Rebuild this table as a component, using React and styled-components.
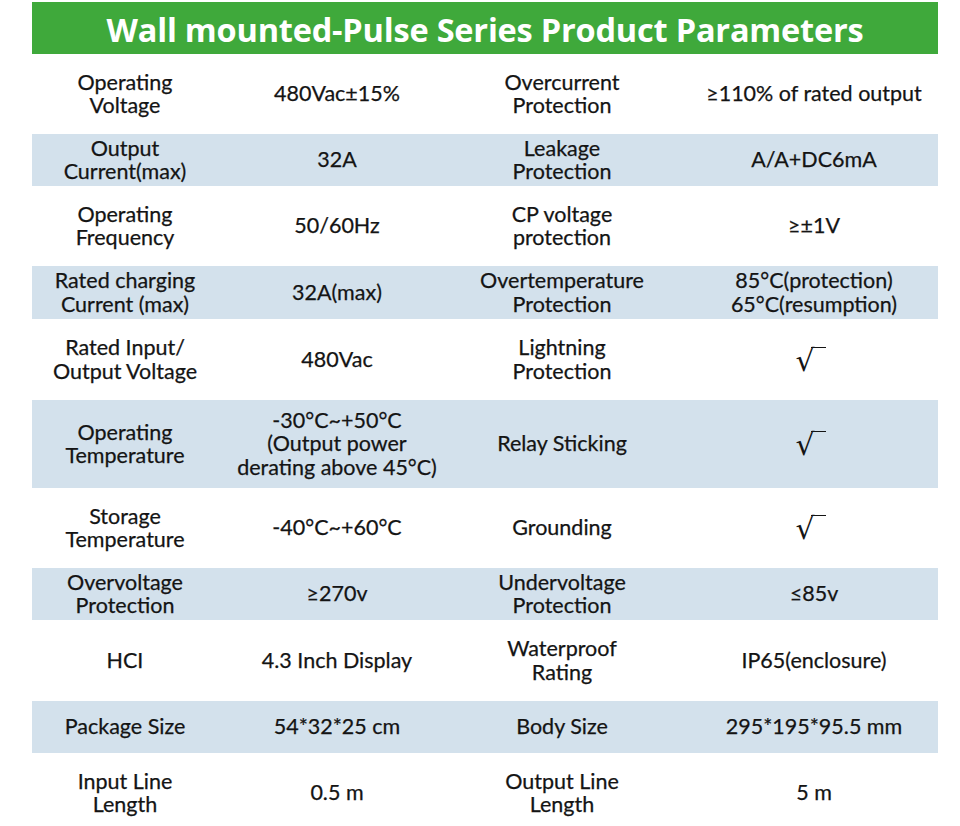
import styled, { createGlobalStyle } from "styled-components";

const GlobalStyle = createGlobalStyle`
  body {
    margin: 0;
    background: #ffffff;
    font-family: Lato, "Open Sans", sans-serif;
    color: #141414;
  }
`;

const rows = [
  ["Operating\nVoltage", "480Vac±15%", "Overcurrent\nProtection", "≥110% of rated output", 80],
  ["Output\nCurrent(max)", "32A", "Leakage\nProtection", "A/A+DC6mA", 52],
  ["Operating\nFrequency", "50/60Hz", "CP voltage\nprotection", "≥±1V", 80],
  ["Rated charging\nCurrent (max)", "32A(max)", "Overtemperature\nProtection", "85°C(protection)\n65°C(resumption)", 53],
  ["Rated Input/\nOutput Voltage", "480Vac", "Lightning\nProtection", "check", 81],
  ["Operating\nTemperature", "-30°C~+50°C\n(Output power\nderating above 45°C)", "Relay Sticking", "check", 88],
  ["Storage\nTemperature", "-40°C~+60°C", "Grounding", "check", 80],
  ["Overvoltage\nProtection", "≥270v", "Undervoltage\nProtection", "≤85v", 52],
  ["HCI", "4.3 Inch Display", "Waterproof\nRating", "IP65(enclosure)", 81],
  ["Package Size", "54*32*25 cm", "Body Size", "295*195*95.5 mm", 52],
  ["Input Line\nLength", "0.5 m", "Output Line\nLength", "5 m", 80],
];

const Sheet = styled.div`
  width: 906px;
  margin: 2px 0 0 32px;
`;

const Title = styled.h1`
  margin: 0;
  height: 52px;
  background: #3fa93b;
  color: #ffffff;
  font-family: "Open Sans", Lato, sans-serif;
  font-weight: 700;
  font-size: 32.5px;
  letter-spacing: -0.2px;
  display: flex;
  align-items: center;
  justify-content: center;
  padding-top: 2px;
  box-sizing: border-box;
`;

const Row = styled.div`
  display: grid;
  grid-template-columns: 186px 238px 212px 270px;
  height: ${(p) => p.$h}px;
  background: ${(p) => (p.$shaded ? "#d3e1ec" : "#ffffff")};
`;

const Cell = styled.div`
  display: flex;
  align-items: center;
  justify-content: center;
  text-align: center;
  white-space: pre-line;
  font-size: 21.5px;
  line-height: 23.5px;
  -webkit-text-stroke: 0.25px #141414;
  padding-left: ${(p) => (p.$shift ? 22 : 0)}px;
`;

// radical sign with its vinculum drawn as a short rule over the top right
const Check = styled.span`
  position: relative;
  display: inline-block;
  font-size: 30px;
  line-height: 30px;
  font-family: "DejaVu Sans", sans-serif;
  -webkit-text-stroke: 0;
  padding-right: 14px;
  margin-left: -4px;
  margin-top: 2px;
`;

const Bar = styled.span`
  position: absolute;
  top: 1px;
  left: 16px;
  width: 15px;
  border-top: 1.6px solid #141414;
`;

const Value = ({ text }) =>
  text === "check" ? (
    <Check>
      √<Bar />
    </Check>
  ) : (
    text
  );

export default function App() {
  return (
    <>
      <GlobalStyle />
      <Sheet>
        <Title>Wall mounted-Pulse Series Product Parameters</Title>
        {rows.map(([a, b, c, d, h], i) => (
          <Row key={i} $h={h} $shaded={i % 2 === 1}>
            <Cell>{a}</Cell>
            <Cell>{b}</Cell>
            <Cell>{c}</Cell>
            <Cell $shift>
              <Value text={d} />
            </Cell>
          </Row>
        ))}
      </Sheet>
    </>
  );
}
